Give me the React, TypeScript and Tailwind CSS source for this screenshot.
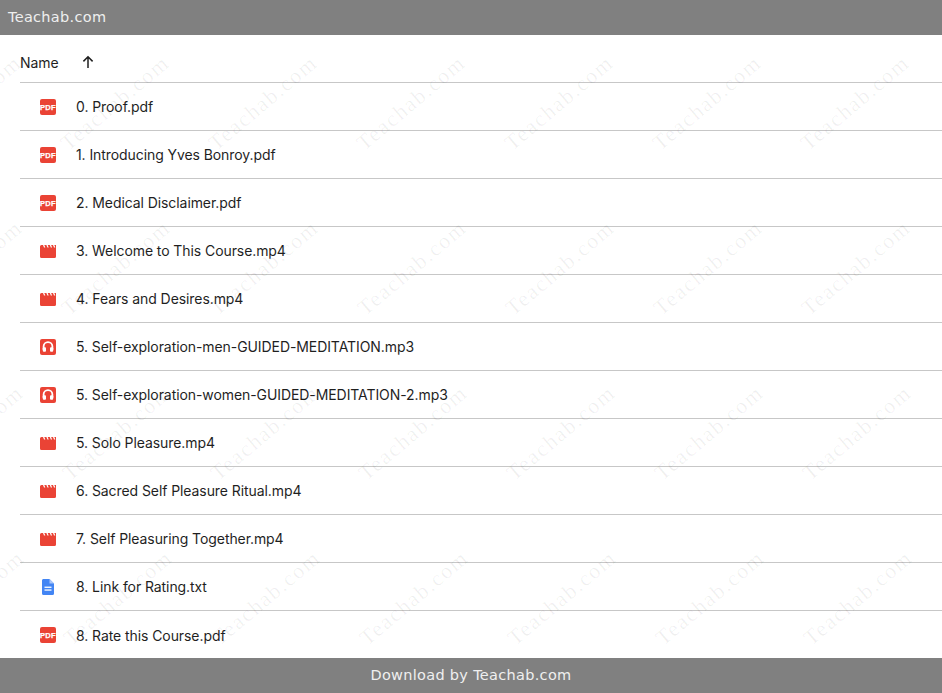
const files: [string, "pdf" | "video" | "audio" | "doc"][] = [
  ["0. Proof.pdf", "pdf"],
  ["1. Introducing Yves Bonroy.pdf", "pdf"],
  ["2. Medical Disclaimer.pdf", "pdf"],
  ["3. Welcome to This Course.mp4", "video"],
  ["4. Fears and Desires.mp4", "video"],
  ["5. Self-exploration-men-GUIDED-MEDITATION.mp3", "audio"],
  ["5. Self-exploration-women-GUIDED-MEDITATION-2.mp3", "audio"],
  ["5. Solo Pleasure.mp4", "video"],
  ["6. Sacred Self Pleasure Ritual.mp4", "video"],
  ["7. Self Pleasuring Together.mp4", "video"],
  ["8. Link for Rating.txt", "doc"],
  ["8. Rate this Course.pdf", "pdf"],
];

function FileIcon({ kind }: { kind: string }) {
  if (kind === "pdf")
    return (
      <svg width="16" height="16" viewBox="0 0 16 16">
        <rect width="16" height="16" rx="2" fill="#ea4335" />
        <text x="8" y="10.8" textAnchor="middle" fontSize="7.5" fontWeight="700" letterSpacing="0.3" stroke="#fff" strokeWidth="0.25" fill="#fff" fontFamily="Liberation Sans, sans-serif">PDF</text>
      </svg>
    );
  if (kind === "video")
    return (
      <svg width="16" height="16" viewBox="0 0 16 16">
        <path fill="#ea4335" d="M0 3.5A1.5 1.5 0 0 1 1.5 2H3l1 2.6h1.3L4.3 2H6.4l1 2.6h1.3L7.7 2H9.8l1 2.6h1.3L11.1 2H13l1 2.6h1.3L14.3 2H16V13.5a1.5 1.5 0 0 1-1.5 1.5h-13A1.5 1.5 0 0 1 0 13.5z" />
      </svg>
    );
  if (kind === "audio")
    return (
      <svg width="16" height="16" viewBox="0 0 16 16">
        <rect width="16" height="16" rx="2" fill="#ea4335" />
        <path d="M3.6 11V7.6a4.4 4.4 0 0 1 8.8 0V11" fill="none" stroke="#fff" strokeWidth="1.8" />
        <rect x="2.8" y="8.2" width="3.2" height="4.6" rx="1" fill="#fff" />
        <rect x="10" y="8.2" width="3.2" height="4.6" rx="1" fill="#fff" />
      </svg>
    );
  return (
    <svg width="16" height="16" viewBox="0 0 16 16">
      <path fill="#4285f4" d="M3.2 0H9.5L14 4.5V14.5A1.5 1.5 0 0 1 12.5 16H3.5A1.5 1.5 0 0 1 2 14.5V1.5A1.5 1.5 0 0 1 3.2 0z" />
      <path fill="#a9c6fa" d="M9.5 0L14 4.5H9.5z" />
      <rect x="4.5" y="7.6" width="7" height="1.3" fill="#fff" />
      <rect x="4.5" y="10.4" width="7" height="1.3" fill="#fff" />
    </svg>
  );
}

const marks: { x: number; y: number }[] = [];
for (let r = 0; r < 4; r++) {
  for (let c = 0; c < 7; c++) {
    marks.push({ x: -33 + c * 148 + r, y: 103 + r * 165 });
  }
}

export default function App() {
  return (
    <div className="relative w-[942px] h-[693px] overflow-hidden bg-white font-['Inter',sans-serif]">
      <header className="relative z-10 h-[35px] bg-[#808080] flex items-center pl-2 font-['DejaVu_Sans',sans-serif] text-[14.5px] tracking-[0.3px] text-[#efefef]">
        Teachab.com
      </header>
      <main className="pl-5">
        <div className="h-[48px] pt-[8px] flex items-center border-b border-[#c7c7c7] text-[14px] tracking-[-0.08px] text-[#1f1f1f]">
          <span className="w-[60px]">Name</span>
          <svg width="16" height="16" viewBox="0 0 16 16" className="-mt-[2px]">
            <path d="M8 14V3M3.4 7.4L8 2.8l4.6 4.6" fill="none" stroke="#1f1f1f" strokeWidth="1.5" />
          </svg>
        </div>
        {files.map(([name, kind], i) => (
          <div key={i} className={`h-[48px] flex items-center text-[14px] tracking-[-0.08px] text-[#1f1f1f] ${i < files.length - 1 ? "border-b border-[#c7c7c7]" : ""}`}>
            <span className="ml-5 w-[36px] flex"><FileIcon kind={kind} /></span>
            <span>{name}</span>
          </div>
        ))}
      </main>
      <footer className="absolute z-10 left-0 right-0 bottom-0 h-[35px] pt-[1px] bg-[#808080] flex items-center justify-center font-['DejaVu_Sans',sans-serif] text-[14.5px] tracking-[0.3px] text-[#efefef]">
        Download by Teachab.com
      </footer>
      {marks.map((m, i) => (
        <span
          key={i}
          className="absolute w-[200px] h-[24px] text-center pointer-events-none whitespace-nowrap font-['Liberation_Serif',serif] text-[22px] tracking-[1.6px] leading-[24px] text-black/[0.06] -rotate-[40deg]"
          style={{ left: m.x - 100, top: m.y - 12 }}
        >
          Teachab.com
        </span>
      ))}
    </div>
  );
}
